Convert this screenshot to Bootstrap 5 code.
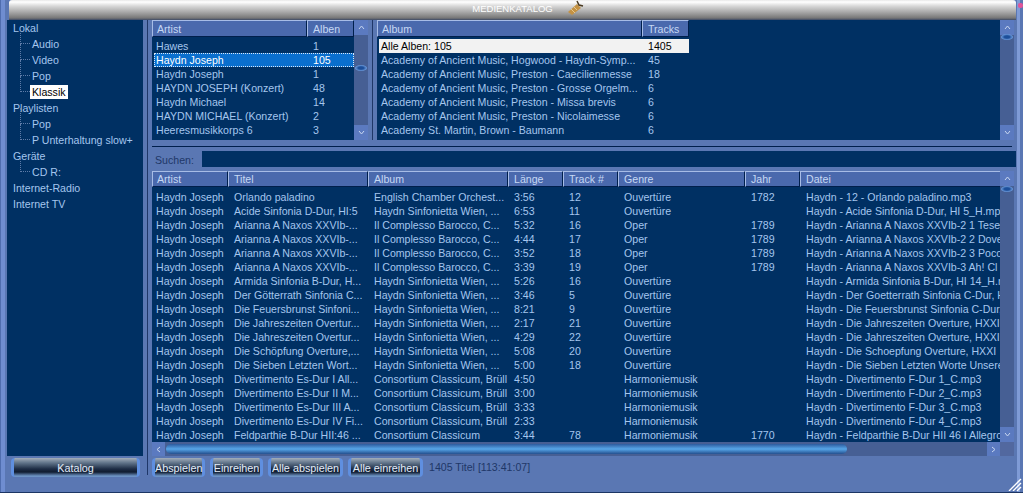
<!DOCTYPE html>
<html lang="de">
<head>
<meta charset="UTF-8">
<title>Medienkatalog</title>
<link href="https://cdn.jsdelivr.net/npm/bootstrap@5.3.0/dist/css/bootstrap.min.css" rel="stylesheet">
<style>
html, body { height: 493px; overflow: hidden; }
body { background: #5a77b3; color: #a5c6ee; font-family: "Liberation Sans", Arial, sans-serif; font-size: 10.6px; line-height: 14px; }
.shell { display: grid; grid-template-columns: 136px 9px 1fr; grid-template-rows: 20px 436px 37px; width: 1023px; height: 493px; padding-left: 7px; padding-right: 7px; box-shadow: inset 0 -1px #1c3564, inset 1px 0 #4f6dae, inset 5px 0 #6f8dd0; position: relative; }
.titlebar { grid-column: 1 / 4; margin-left: 2px; border-radius: 3px 3px 0 0; background: linear-gradient(#e8e8e8 0, #fff 2px, #d8d8d8 6px, #a9a9a9 12px, #777 18px, #3c4a66 20px); color: #fff; font-size: 9.5px; text-align: center; line-height: 16px; height: 20px; }
.titlebar svg { vertical-align: -4px; margin-left: 13px; margin-right: -31px; }
.tree { grid-row: 2; grid-column: 1; background: #003063; padding-left: 6px; }
.tree div { height: 16px; line-height: 16px; white-space: nowrap; }
.tree .sub { padding-left: 19px; position: relative; }
.tree .sub::before { content: ""; position: absolute; left: 7px; top: -8px; height: 16px; width: 10px; border-left: 1px dotted #5d7ba8; border-bottom: 1px dotted #5d7ba8; }
.tree .sel span { background: #fff; color: #000; padding: 1px 2px; margin-left: -2px; }
.side-split { grid-row: 2 / 4; grid-column: 2; margin-bottom: 18px; position: relative; }
.side-split::after, .pane-split::after { content: ""; position: absolute; left: 4px; top: 0; bottom: 0; width: 1px; background: #1f3768; }
.main { grid-row: 2; grid-column: 3; min-width: 0; padding-right: 2px; }
.top { height: 120px; }
.pane { background: #003063; min-width: 0; }
.artists { width: 202px; }
.pane-split { width: 9px; position: relative; }
.hdr { height: 17px; }
.hdr div { height: 17px; background: #4a69ad; color: #c6d8f4; line-height: 16px; padding-left: 4px; border: 1px solid #001f4c; border-top-color: #a7bce6; border-left-color: #a7bce6; white-space: nowrap; overflow: hidden; flex: none; }
.hdr div + div { padding-left: 5px; }
.rows { padding-top: 2px; }
.row-x { height: 14px; line-height: 14px; white-space: nowrap; }
.row-x span { flex: none; overflow: hidden; padding-left: 4px; }
.row-x span + span { padding-left: 6px; }
.row-x.active { background: #0a6fce; color: #fff; outline: 1px dotted #d7e6f7; outline-offset: -1px; margin-left: 2px; }
.row-x.active span:first-child, .row-x.white span:first-child { margin-left: -2px; }
.row-x.white { background: #f2f2f2; color: #000; width: 310px; margin-left: 2px; }
.c-artist { width: 155px; }
.c-count { width: 47px; }
.c-album { width: 265px; }
.sb { width: 14px; flex: none; background: #465f94; position: relative; }
.sb .arrow { width: 14px; height: 15px; background: #5b7ac0; flex: none; display: flex; align-items: center; justify-content: center; }
.sb .grip { position: absolute; left: 1px; width: 12px; height: 6px; border-radius: 50%; background: radial-gradient(#1d4f9a 30%, #6f9ee0 70%); }
.grip-a { top: 45px; }
.grip-b { top: 14px; }
.grip-c { top: 15px; }
.hsplit { height: 11px; position: relative; margin-right: -2px; }
.hsplit::after { content: ""; position: absolute; left: 0; right: 4px; top: 6px; height: 1px; background: #001f4c; }
.search { height: 17px; margin-right: -2px; }
.search label { width: 50px; padding-left: 3px; color: #1f3768; flex: none; }
.search .field { height: 16px; background: #003063; margin-bottom: 1px; }
.tracks { margin-top: 3px; background: #003063; height: 285px; }
.tracks .hdr, .tracks .hdr div { height: 16px; line-height: 15px; }
.tracks .rows { height: 254px; overflow: hidden; padding-top: 3px; }
.hbar { height: 14px; background: #465f94; flex: none; position: relative; }
.hbar .arrow { width: 13px; background: #5b7ac0; flex: none; display: flex; align-items: center; justify-content: center; }
.hbar .thumb { position: absolute; left: 14px; width: 681px; top: 2px; height: 10px; border-radius: 5px; background: linear-gradient(#2c5b9e, #57a6e8 50%, #24508f); }
.hbar .end { margin-left: auto; }
.hbar .corner { width: 14px; background: #52689f; flex: none; }
.cat { grid-row: 3; grid-column: 1; padding: 2px 3px 0 4px; height: 37px; }
.btn.gbtn { background: linear-gradient(#a3aebb 0, #5f7288 5px, #1d2c44 11px, #101c30 14px, #6d93c4 18px); color: #e4edf9; border: 0; border-left: 3px solid #5f8fe0; border-right: 3px solid #5f8fe0; border-radius: 4px; height: 19px; padding: 0; line-height: 18px; font-size: 10.8px; white-space: nowrap; }
.footer { grid-row: 3; grid-column: 3; gap: 5px; height: 37px; padding-top: 2px; }
.footer .gbtn { width: 53px; }
.footer .gbtn.wide { width: 75px; }
.footer .count { color: #1f3768; line-height: 18px; margin-left: 1px; }
.grip-corner { position: absolute; right: 1px; bottom: 2px; }
.dot { position: absolute; right: 0; top: 3px; width: 5px; height: 5px; background: #e0559a; border-radius: 2px; }
.edge { position: absolute; right: 3px; top: 0; bottom: 1px; width: 3px; background: #7f9bd6; }
</style>
</head>
<body>
<div class="shell">
  <div class="titlebar">MEDIENKATALOG<svg width="18" height="16" viewBox="0 0 18 16"><path d="M2 12 11 4l4 4-9 7z" fill="#c49244"/><path d="M5 9l4 4M8 7l3 3" stroke="#e8c88a" stroke-width="1" fill="none"/><path d="M11 1l2 4 4 1" stroke="#4a3a20" stroke-width="1.5" fill="none"/></svg></div>

  <div class="tree">
    <div>Lokal</div>
    <div class="sub">Audio</div>
    <div class="sub">Video</div>
    <div class="sub">Pop</div>
    <div class="sub sel"><span>Klassik</span></div>
    <div>Playlisten</div>
    <div class="sub">Pop</div>
    <div class="sub">P Unterhaltung slow+</div>
    <div>Geräte</div>
    <div class="sub">CD R:</div>
    <div>Internet-Radio</div>
    <div>Internet TV</div>
  </div>
  <div class="side-split"></div>

  <div class="main d-flex flex-column">
    <div class="top d-flex">
      <div class="pane artists flex-shrink-0 overflow-hidden">
        <div class="hdr d-flex"><div class="c-artist">Artist</div><div class="c-count">Alben</div></div>
        <div class="rows">
          <div class="row-x d-flex"><span class="c-artist">Hawes</span><span>1</span></div>
          <div class="row-x d-flex active"><span class="c-artist">Haydn Joseph</span><span>105</span></div>
          <div class="row-x d-flex"><span class="c-artist">Haydn Joseph</span><span>1</span></div>
          <div class="row-x d-flex"><span class="c-artist">HAYDN JOSEPH (Konzert)</span><span>48</span></div>
          <div class="row-x d-flex"><span class="c-artist">Haydn Michael</span><span>14</span></div>
          <div class="row-x d-flex"><span class="c-artist">HAYDN MICHAEL (Konzert)</span><span>2</span></div>
          <div class="row-x d-flex"><span class="c-artist">Heeresmusikkorps 6</span><span>3</span></div>
          <div class="row-x d-flex"><span class="c-artist">Heeresmusikkorps 9</span><span>1</span></div>
        </div>
      </div>
      <div class="sb d-flex flex-column"><div class="arrow"><svg width="7" height="5" viewBox="0 0 7 5"><path d="M1 4l2.5-3L6 4" fill="none" stroke="#c8d7f0"/></svg></div><div class="grip grip-a"></div><div class="arrow mt-auto"><svg width="7" height="5" viewBox="0 0 7 5"><path d="M1 1l2.5 3L6 1" fill="none" stroke="#c8d7f0"/></svg></div></div>
      <div class="pane-split flex-shrink-0"></div>
      <div class="pane flex-grow-1 overflow-hidden">
        <div class="hdr d-flex"><div class="c-album">Album</div><div class="c-count">Tracks</div></div>
        <div class="rows">
          <div class="row-x d-flex white"><span class="c-album">Alle Alben: 105</span><span>1405</span></div>
          <div class="row-x d-flex"><span class="c-album">Academy of Ancient Music, Hogwood - Haydn-Symp...</span><span>45</span></div>
          <div class="row-x d-flex"><span class="c-album">Academy of Ancient Music, Preston - Caecilienmesse</span><span>18</span></div>
          <div class="row-x d-flex"><span class="c-album">Academy of Ancient Music, Preston - Grosse Orgelm...</span><span>6</span></div>
          <div class="row-x d-flex"><span class="c-album">Academy of Ancient Music, Preston - Missa brevis</span><span>6</span></div>
          <div class="row-x d-flex"><span class="c-album">Academy of Ancient Music, Preston - Nicolaimesse</span><span>6</span></div>
          <div class="row-x d-flex"><span class="c-album">Academy St. Martin, Brown - Baumann</span><span>6</span></div>
          <div class="row-x d-flex"><span class="c-album">Academy St. Martin, Brown - Haydn</span><span>6</span></div>
        </div>
      </div>
      <div class="sb d-flex flex-column"><div class="arrow"><svg width="7" height="5" viewBox="0 0 7 5"><path d="M1 4l2.5-3L6 4" fill="none" stroke="#c8d7f0"/></svg></div><div class="grip grip-b"></div><div class="arrow mt-auto"><svg width="7" height="5" viewBox="0 0 7 5"><path d="M1 1l2.5 3L6 1" fill="none" stroke="#c8d7f0"/></svg></div></div>
    </div>
    <div class="hsplit flex-shrink-0"></div>
    <div class="search d-flex align-items-center flex-shrink-0"><label>Suchen:</label><div class="field flex-grow-1"></div></div>
    <div class="tracks d-flex flex-column">
      <div class="d-flex flex-grow-1" style="min-height:0">
        <div class="flex-grow-1 overflow-hidden">
          <div class="hdr d-flex" id="trackHead"></div>
          <div class="rows" id="trackRows"></div>
        </div>
        <div class="sb d-flex flex-column"><div class="arrow"><svg width="7" height="5" viewBox="0 0 7 5"><path d="M1 4l2.5-3L6 4" fill="none" stroke="#c8d7f0"/></svg></div><div class="grip grip-c"></div><div class="arrow mt-auto"><svg width="7" height="5" viewBox="0 0 7 5"><path d="M1 1l2.5 3L6 1" fill="none" stroke="#c8d7f0"/></svg></div></div>
      </div>
      <div class="hbar d-flex"><div class="arrow"><svg width="5" height="7" viewBox="0 0 5 7"><path d="M4 1L1 3.5 4 6" fill="none" stroke="#c8d7f0"/></svg></div><div class="thumb"></div><div class="arrow end"><svg width="5" height="7" viewBox="0 0 5 7"><path d="M1 1l3 2.500L1 6" fill="none" stroke="#c8d7f0"/></svg></div><div class="corner"></div></div>
    </div>
  </div>

  <div class="cat"><button class="btn gbtn w-100">Katalog</button></div>
  <div class="footer d-flex align-items-start">
    <button class="btn gbtn">Abspielen</button>
    <button class="btn gbtn">Einreihen</button>
    <button class="btn gbtn wide">Alle abspielen</button>
    <button class="btn gbtn wide">Alle einreihen</button>
    <span class="count">1405 Titel [113:41:07]</span>
  </div>
  <div class="edge"></div>
  <div class="dot"></div>
  <svg class="grip-corner" width="14" height="13" viewBox="0 0 14 13"><path d="M1 13 13 1M5 13l8-8M9 13l4-4" stroke="#fff" stroke-width="1.4"/></svg>
</div>
<script>
  // track table, widths follow the header columns
  const widths = [76, 140, 140, 55, 55, 127, 55, 201];
  const names = ["Artist", "Titel", "Album", "Länge", "Track #", "Genre", "Jahr", "Datei"];
  const A = "Haydn Sinfonietta Wien, ...", B = "Il Complesso Barocco, C...", C = "Consortium Classicum, Brüll";
  const tracks = [
    ["Orlando paladino", "English Chamber Orchest...", "3:56", "12", "Ouvertüre", "1782", "Haydn - 12 - Orlando paladino.mp3"],
    ["Acide Sinfonia D-Dur, HI:5", A, "6:53", "11", "Ouvertüre", "", "Haydn - Acide Sinfonia D-Dur, HI 5_H.mp3"],
    ["Arianna A Naxos XXVIb-...", B, "5:32", "16", "Oper", "1789", "Haydn - Arianna A Naxos XXVIb-2 1 Tese"],
    ["Arianna A Naxos XXVIb-...", B, "4:44", "17", "Oper", "1789", "Haydn - Arianna A Naxos XXVIb-2 2 Dove"],
    ["Arianna A Naxos XXVIb-...", B, "3:52", "18", "Oper", "1789", "Haydn - Arianna A Naxos XXVIb-2 3 Poco"],
    ["Arianna A Naxos XXVIb-...", B, "3:39", "19", "Oper", "1789", "Haydn - Arianna A Naxos XXVIb-3  Ah! Cl"],
    ["Armida Sinfonia B-Dur, H...", A, "5:26", "16", "Ouvertüre", "", "Haydn - Armida Sinfonia B-Dur, HI 14_H.m"],
    ["Der Götterrath Sinfonia C...", A, "3:46", "5", "Ouvertüre", "", "Haydn - Der Goetterrath Sinfonia C-Dur, H"],
    ["Die Feuersbrunst Sinfoni...", A, "8:21", "9", "Ouvertüre", "", "Haydn - Die Feuersbrunst Sinfonia C-Dur,"],
    ["Die Jahreszeiten Overtur...", A, "2:17", "21", "Ouvertüre", "", "Haydn - Die Jahreszeiten Overture, HXXI"],
    ["Die Jahreszeiten Overtur...", A, "4:29", "22", "Ouvertüre", "", "Haydn - Die Jahreszeiten Overture, HXXI"],
    ["Die Schöpfung Overture,...", A, "5:08", "20", "Ouvertüre", "", "Haydn - Die Schoepfung Overture, HXXI"],
    ["Die Sieben Letzten Wort...", A, "5:00", "18", "Ouvertüre", "", "Haydn - Die Sieben Letzten Worte Unsere"],
    ["Divertimento Es-Dur I All...", C, "4:50", "", "Harmoniemusik", "", "Haydn - Divertimento F-Dur 1_C.mp3"],
    ["Divertimento Es-Dur II M...", C, "3:00", "", "Harmoniemusik", "", "Haydn - Divertimento F-Dur 2_C.mp3"],
    ["Divertimento Es-Dur III A...", C, "3:33", "", "Harmoniemusik", "", "Haydn - Divertimento F-Dur 3_C.mp3"],
    ["Divertimento Es-Dur IV Fi...", C, "2:33", "", "Harmoniemusik", "", "Haydn - Divertimento F-Dur 4_C.mp3"],
    ["Feldparthie B-Dur HII:46 ...", "Consortium Classicum", "3:44", "78", "Harmoniemusik", "1770", "Haydn - Feldparthie B-Dur HII 46 I Allegro"]
  ];
  document.getElementById("trackHead").innerHTML = names.map((n, i) => `<div style="width:${widths[i]}px">${n}</div>`).join("");
  document.getElementById("trackRows").innerHTML = tracks.map(t =>
    `<div class="row-x d-flex">` + ["Haydn Joseph", ...t].map((c, i) => `<span style="width:${widths[i]}px">${c}</span>`).join("") + `</div>`
  ).join("");
</script>
<script src="https://cdn.jsdelivr.net/npm/bootstrap@5.3.0/dist/js/bootstrap.bundle.min.js"></script>
</body>
</html>
